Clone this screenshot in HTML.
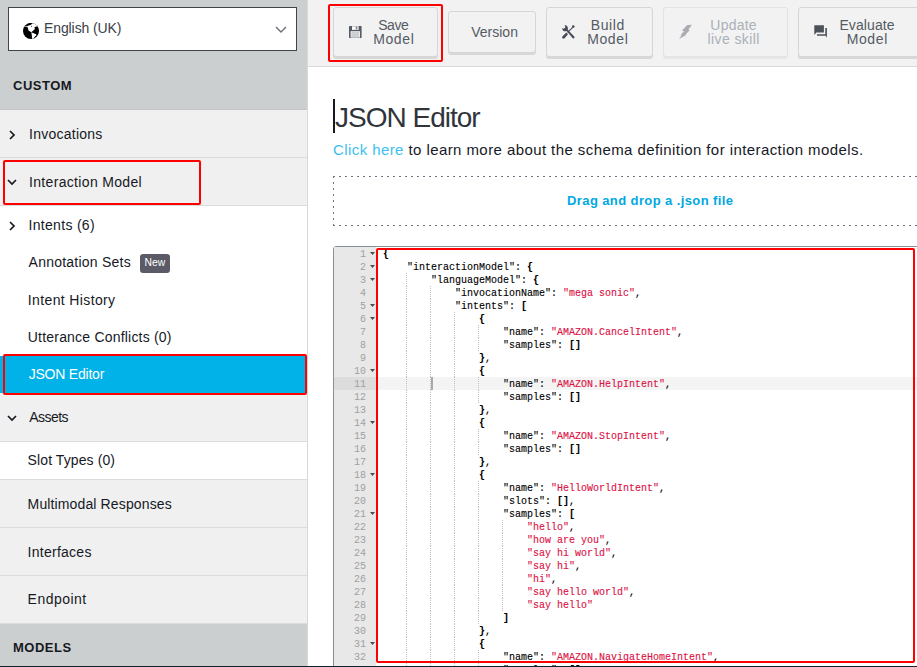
<!DOCTYPE html>
<html><head><meta charset="utf-8"><style>
*{box-sizing:border-box;margin:0;padding:0}
html,body{width:917px;height:667px;overflow:hidden;background:#fff;font-family:"Liberation Sans",sans-serif;color:#232f3e}
.a{position:absolute}
.t{position:absolute;white-space:pre;line-height:1}
#side{position:absolute;left:0;top:0;width:308px;height:667px;background:#f0f0f0}
.sep{position:absolute;left:0;width:307px;height:1px;background:#dcdcdc}
.chev{position:absolute;width:6px;height:6px;border-right:1.6px solid #16191f;border-bottom:1.6px solid #16191f}
.btn{position:absolute;background:#f2f2f2;border:1px solid #d6d6d6;border-radius:3px;box-shadow:0 2px 0 #d8d8d8;color:#545b64;font-size:14px;line-height:14px}
.code{position:absolute;left:383px;font-family:"Liberation Mono",monospace;font-size:10.5px;line-height:13px;white-space:pre;color:#000;transform-origin:0 0;transform:scaleX(0.95238);-webkit-text-stroke:0.12px currentColor}
.s{color:#dd1144}
.p{font-weight:bold}
.ln{position:absolute;left:326px;width:40px;text-align:right;font-family:"Liberation Mono",monospace;font-size:10.5px;line-height:13px;color:#a0a0a0;transform-origin:100% 0;transform:scaleX(0.95238)}
.fold{position:absolute;left:370px;width:0;height:0;border-left:2.5px solid transparent;border-right:2.5px solid transparent;border-top:3px solid #777}
.guide{position:absolute;width:1px;background:repeating-linear-gradient(to bottom,#c0c0c0 0,#c0c0c0 1px,transparent 1px,transparent 2px)}
</style></head><body>
<div id="side">
<div class="a" style="left:0;top:0;width:307px;height:109px;background:#cbcfd0"></div>
<div class="a" style="left:0;top:109px;width:307px;height:1px;background:#c4c4c4"></div>
<div class="a" style="left:8px;top:7px;width:289px;height:44px;background:#fff;border:1px solid #3f4548"></div>
<svg class="a" style="left:20px;top:20px" width="22" height="22" viewBox="0 0 22 22"><defs><clipPath id="gc"><circle cx="11" cy="11" r="8"/></clipPath></defs><g clip-path="url(#gc)"><rect width="22" height="22" fill="#000"/><path d="M2.5 6.6L3 6.8 4.6 6.4 7.4 6.7 8.6 10.5 11.2 12.2 12.8 10.9 14.9 8.9 14.5 6.9 16.8 6.4 18.5 4.5 15 2.5 14 3.6 13.5 2.5 11 4.8 7.2 5.9 4 5.8z" fill="#fff"/><path d="M6.2 5.2L9.5 4.1 13 2.6 11.5 2.5 7.8 3.6z" fill="#000"/><path d="M11.2 12.3L15.6 14 16.6 15 14.3 17.2 13.4 19 12 18.8 11.8 14.9z" fill="#fff"/><circle cx="11.6" cy="6.2" r="0.5" fill="#000"/></g></svg>
<div class="t" style="left:44px;top:21.4px;font-size:14px;color:#3b4148;letter-spacing:-0.1px">English (UK)</div>
<svg class="a" style="left:275px;top:25px" width="12" height="9" viewBox="0 0 12 9"><path d="M1 2l5 5 5-5" fill="none" stroke="#6b6f75" stroke-width="1.4"/></svg>
<div class="t" style="left:13px;top:79.0px;font-size:13px;font-weight:bold;color:#16191f;letter-spacing:0.5px">CUSTOM</div>
<div class="a" style="left:0;top:110px;width:307px;height:47px;background:#f0f0f0"></div>
<div class="a" style="left:0;top:158px;width:307px;height:47px;background:#f0f0f0"></div>
<div class="a" style="left:0;top:206px;width:307px;height:150px;background:#ffffff"></div>
<div class="a" style="left:0;top:356px;width:307px;height:37px;background:#00b2e7"></div>
<div class="a" style="left:0;top:393px;width:307px;height:48px;background:#f0f0f0"></div>
<div class="a" style="left:0;top:442px;width:307px;height:37px;background:#ffffff"></div>
<div class="a" style="left:0;top:480px;width:307px;height:47px;background:#f0f0f0"></div>
<div class="a" style="left:0;top:528px;width:307px;height:47px;background:#f0f0f0"></div>
<div class="a" style="left:0;top:576px;width:307px;height:48px;background:#f0f0f0"></div>
<div class="a" style="left:0;top:624px;width:307px;height:43px;background:#cbcfd0"></div>
<div class="sep" style="top:157px"></div>
<div class="sep" style="top:205px"></div>
<div class="sep" style="top:441px"></div>
<div class="sep" style="top:479px"></div>
<div class="sep" style="top:527px"></div>
<div class="sep" style="top:575px"></div>
<div class="sep" style="top:623px"></div>
<div class="t" style="left:29px;top:126.9px;font-size:14px;color:#16191f;letter-spacing:0.25px">Invocations</div>
<div class="t" style="left:29px;top:174.9px;font-size:14px;color:#16191f;letter-spacing:0.33px">Interaction Model</div>
<div class="t" style="left:28.5px;top:218.3px;font-size:14px;color:#16191f;letter-spacing:0.31px">Intents (6)</div>
<div class="t" style="left:28.6px;top:255.2px;font-size:14px;color:#16191f;letter-spacing:0.23px">Annotation Sets</div>
<div class="t" style="left:27.8px;top:293.2px;font-size:14px;color:#16191f;letter-spacing:0.37px">Intent History</div>
<div class="t" style="left:27.8px;top:329.9px;font-size:14px;color:#16191f;letter-spacing:0.2px">Utterance Conflicts (0)</div>
<div class="t" style="left:28.7px;top:367.1px;font-size:14px;color:#ffffff;letter-spacing:-0.22px">JSON Editor</div>
<div class="t" style="left:29.3px;top:410.0px;font-size:14px;color:#16191f;letter-spacing:-0.55px">Assets</div>
<div class="t" style="left:27.6px;top:453.4px;font-size:14px;color:#16191f;letter-spacing:0.1px">Slot Types (0)</div>
<div class="t" style="left:27.6px;top:496.9px;font-size:14px;color:#16191f;letter-spacing:0.13px">Multimodal Responses</div>
<div class="t" style="left:27.6px;top:544.7px;font-size:14px;color:#16191f;letter-spacing:0.26px">Interfaces</div>
<div class="t" style="left:27.6px;top:592.4px;font-size:14px;color:#16191f;letter-spacing:0.47px">Endpoint</div>
<svg class="a" style="left:8px;top:130px" width="8" height="10" viewBox="0 0 8 10"><path d="M2 1l4 4-4 4" fill="none" stroke="#16191f" stroke-width="1.7"/></svg>
<svg class="a" style="left:7px;top:178px" width="10" height="8" viewBox="0 0 10 8"><path d="M1 2l4 4 4-4" fill="none" stroke="#16191f" stroke-width="1.7"/></svg>
<svg class="a" style="left:8px;top:221px" width="8" height="10" viewBox="0 0 8 10"><path d="M2 1l4 4-4 4" fill="none" stroke="#16191f" stroke-width="1.7"/></svg>
<svg class="a" style="left:7px;top:414px" width="10" height="8" viewBox="0 0 10 8"><path d="M1 2l4 4 4-4" fill="none" stroke="#16191f" stroke-width="1.7"/></svg>
<div class="a" style="left:140px;top:254px;width:30px;height:19px;background:#5a5b66;border-radius:3px"></div>
<div class="t" style="left:144.5px;top:258.1px;font-size:10.3px;color:#fff">New</div>
<div class="t" style="left:13px;top:640.7px;font-size:13px;font-weight:bold;color:#16191f;letter-spacing:0.5px">MODELS</div>
<div class="a" style="left:3px;top:160px;width:198px;height:45px;border:2px solid #f00;border-radius:2px"></div>
<div class="a" style="left:3px;top:354px;width:304px;height:41px;border:2px solid #f00;border-radius:2px"></div>
</div>
<div class="a" style="left:307px;top:0;width:1px;height:667px;background:#d8d8d8"></div>
<div class="a" style="left:308px;top:0;width:609px;height:67px;background:#f2f2f2;border-bottom:1px solid #dadada"></div>
<div class="btn" style="left:333px;top:7px;width:105px;height:50px"></div>
<div class="btn" style="left:448px;top:11px;width:88px;height:42px"></div>
<div class="btn" style="left:546px;top:7px;width:107px;height:50px"></div>
<div class="btn" style="left:663px;top:7px;width:125px;height:50px;border-color:#e3e3e3;box-shadow:0 2px 0 #e7e7e7"></div>
<div class="btn" style="left:798px;top:7px;width:130px;height:50px"></div>
<div class="a" style="left:328px;top:4px;width:115px;height:58px;border:2px solid #f00;border-radius:2px"></div>
<div class="t" style="left:243.5px;width:300px;text-align:center;top:18.0px;font-size:14px;color:#545b64;letter-spacing:-0.4px;text-indent:-0.4px">Save</div>
<div class="t" style="left:243.5px;width:300px;text-align:center;top:31.7px;font-size:14px;color:#545b64;letter-spacing:0.6px;text-indent:0.6px">Model</div>
<div class="t" style="left:344.6px;width:300px;text-align:center;top:25.0px;font-size:14px;color:#545b64;letter-spacing:0px;text-indent:0px">Version</div>
<div class="t" style="left:457.5px;width:300px;text-align:center;top:17.8px;font-size:14px;color:#545b64;letter-spacing:0.6px;text-indent:0.6px">Build</div>
<div class="t" style="left:457.5px;width:300px;text-align:center;top:31.8px;font-size:14px;color:#545b64;letter-spacing:0.6px;text-indent:0.6px">Model</div>
<div class="t" style="left:583.5px;width:300px;text-align:center;top:18.2px;font-size:14px;color:#aab1b8;letter-spacing:0.24px;text-indent:0.24px">Update</div>
<div class="t" style="left:583.5px;width:300px;text-align:center;top:31.8px;font-size:14px;color:#aab1b8;letter-spacing:0.4px;text-indent:0.4px">live skill</div>
<div class="t" style="left:717px;width:300px;text-align:center;top:17.8px;font-size:14px;color:#545b64;letter-spacing:0.1px;text-indent:0.1px">Evaluate</div>
<div class="t" style="left:717px;width:300px;text-align:center;top:31.6px;font-size:14px;color:#545b64;letter-spacing:0.6px;text-indent:0.6px">Model</div>
<svg class="a" style="left:349px;top:26px" width="13" height="12" viewBox="0 0 13 12"><rect x="0" y="0" width="12.6" height="12" rx="0.8" fill="#545b64"/><rect x="3" y="0.3" width="6.6" height="3.6" fill="#fff"/><rect x="6.8" y="0.6" width="1" height="3" fill="#545b64"/><rect x="7.8" y="0.6" width="1.6" height="3" fill="#c9cccf"/><rect x="1.6" y="5.2" width="9.4" height="6.3" fill="#f4f4f4"/><rect x="2.4" y="6" width="7.8" height="5.5" fill="#cdd0d3"/></svg>
<svg class="a" style="left:558px;top:22px" width="22" height="20" viewBox="0 0 22 20"><g fill="#454c55" stroke="none"><path d="M6.6 3.1C8.5 3.2 9.9 4.7 9.9 6.4 9.9 8 8.7 9.3 7.1 9.3 5.5 9.3 4.2 8.1 4.1 6.2L5.5 6.7 6.9 6 7.3 4.6z"/><path d="M8.2 8.4L9.4 7.3 16.2 14.6C16.7 15.2 16.6 15.9 16.1 16.3 15.6 16.7 14.9 16.6 14.5 16.1z"/><circle cx="15.3" cy="4.6" r="1.25"/><path d="M14.8 4.6L15.6 5.3 9.9 10.8 9.2 10.1z"/><path d="M8.3 10.6L10 12.3 6.6 16.2C6.1 16.8 5.1 16.9 4.5 16.3 3.9 15.7 4 14.8 4.6 14.3z"/></g></svg>
<svg class="a" style="left:674px;top:20px" width="24" height="22" viewBox="0 0 24 22"><path d="M13.3 4.9L18 4.8 14.4 9.6 15.7 10.2 11.6 14.5 12.2 15 5.1 19 7.6 14.9 6.9 14.6 10.2 11.2 8 10.6z" fill="#a9acb1"/></svg>
<svg class="a" style="left:814px;top:25px" width="14" height="14" viewBox="0 0 14 14"><path d="M0.3 0.2H9.9V7.4H2.4L0.3 9.9z" fill="#4c5259"/><path d="M11.3 3H12.9V12.8L11.6 10.8H3V9.2H11.3z" fill="#4c5259"/></svg>
<div class="a" style="left:333px;top:99px;width:2px;height:34px;background:#16191f"></div>
<div class="t" style="left:335px;top:103.6px;font-size:28px;color:#30353c;letter-spacing:-1px">JSON Editor</div>
<div class="t" style="left:333px;top:141.6px;font-size:15px;color:#16191f;letter-spacing:0.42px"><span style="color:#3cc0ec">Click here</span> to learn more about the schema definition for interaction models.</div>
<div class="a" style="left:333px;top:176px;width:600px;height:1px;background:repeating-linear-gradient(to right,#707381 0 2px,transparent 2px 6px)"></div>
<div class="a" style="left:333px;top:225px;width:600px;height:1px;background:repeating-linear-gradient(to right,#707381 0 2px,transparent 2px 6px)"></div>
<div class="a" style="left:333px;top:176px;width:1px;height:50px;background:repeating-linear-gradient(to bottom,#707381 0 2px,transparent 2px 6px)"></div>
<div class="t" style="left:567px;top:194.0px;font-size:13px;font-weight:bold;color:#00a8e1;letter-spacing:0.4px">Drag and drop a .json file</div>
<div class="a" style="left:333px;top:246px;width:600px;height:430px;border:1px solid #878e99;border-radius:3px;background:#fff"></div>
<div class="a" style="left:334px;top:247px;width:42px;height:420px;background:#e8e8e8"></div>
<div class="a" style="left:334px;top:377px;width:42px;height:13px;background:#dcdcdc"></div>
<div class="a" style="left:376px;top:377px;width:541px;height:13px;background:#f4f4f4"></div>
<div class="a" style="left:431px;top:377px;width:2px;height:13px;background:#aaa"></div>
<div class="ln" style="top:248px">1</div>
<svg class="a" style="left:370px;top:252px" width="5" height="3" viewBox="0 0 5 3"><path d="M0 0H5L2.5 3z" fill="#4d4d4d"/></svg>
<div class="ln" style="top:261px">2</div>
<svg class="a" style="left:370px;top:265px" width="5" height="3" viewBox="0 0 5 3"><path d="M0 0H5L2.5 3z" fill="#4d4d4d"/></svg>
<div class="ln" style="top:274px">3</div>
<svg class="a" style="left:370px;top:278px" width="5" height="3" viewBox="0 0 5 3"><path d="M0 0H5L2.5 3z" fill="#4d4d4d"/></svg>
<div class="guide" style="left:406px;top:273px;height:13px"></div>
<div class="ln" style="top:287px">4</div>
<div class="guide" style="left:406px;top:286px;height:13px"></div>
<div class="guide" style="left:430px;top:286px;height:13px"></div>
<div class="ln" style="top:300px">5</div>
<svg class="a" style="left:370px;top:304px" width="5" height="3" viewBox="0 0 5 3"><path d="M0 0H5L2.5 3z" fill="#4d4d4d"/></svg>
<div class="guide" style="left:406px;top:299px;height:13px"></div>
<div class="guide" style="left:430px;top:299px;height:13px"></div>
<div class="ln" style="top:313px">6</div>
<svg class="a" style="left:370px;top:317px" width="5" height="3" viewBox="0 0 5 3"><path d="M0 0H5L2.5 3z" fill="#4d4d4d"/></svg>
<div class="guide" style="left:406px;top:312px;height:13px"></div>
<div class="guide" style="left:430px;top:312px;height:13px"></div>
<div class="guide" style="left:454px;top:312px;height:13px"></div>
<div class="ln" style="top:326px">7</div>
<div class="guide" style="left:406px;top:325px;height:13px"></div>
<div class="guide" style="left:430px;top:325px;height:13px"></div>
<div class="guide" style="left:454px;top:325px;height:13px"></div>
<div class="guide" style="left:478px;top:325px;height:13px"></div>
<div class="ln" style="top:339px">8</div>
<div class="guide" style="left:406px;top:338px;height:13px"></div>
<div class="guide" style="left:430px;top:338px;height:13px"></div>
<div class="guide" style="left:454px;top:338px;height:13px"></div>
<div class="guide" style="left:478px;top:338px;height:13px"></div>
<div class="ln" style="top:352px">9</div>
<div class="guide" style="left:406px;top:351px;height:13px"></div>
<div class="guide" style="left:430px;top:351px;height:13px"></div>
<div class="guide" style="left:454px;top:351px;height:13px"></div>
<div class="ln" style="top:365px">10</div>
<svg class="a" style="left:370px;top:369px" width="5" height="3" viewBox="0 0 5 3"><path d="M0 0H5L2.5 3z" fill="#4d4d4d"/></svg>
<div class="guide" style="left:406px;top:364px;height:13px"></div>
<div class="guide" style="left:430px;top:364px;height:13px"></div>
<div class="guide" style="left:454px;top:364px;height:13px"></div>
<div class="ln" style="top:378px">11</div>
<div class="guide" style="left:406px;top:377px;height:13px"></div>
<div class="guide" style="left:430px;top:377px;height:13px"></div>
<div class="guide" style="left:454px;top:377px;height:13px"></div>
<div class="guide" style="left:478px;top:377px;height:13px"></div>
<div class="ln" style="top:391px">12</div>
<div class="guide" style="left:406px;top:390px;height:13px"></div>
<div class="guide" style="left:430px;top:390px;height:13px"></div>
<div class="guide" style="left:454px;top:390px;height:13px"></div>
<div class="guide" style="left:478px;top:390px;height:13px"></div>
<div class="ln" style="top:404px">13</div>
<div class="guide" style="left:406px;top:403px;height:13px"></div>
<div class="guide" style="left:430px;top:403px;height:13px"></div>
<div class="guide" style="left:454px;top:403px;height:13px"></div>
<div class="ln" style="top:417px">14</div>
<svg class="a" style="left:370px;top:421px" width="5" height="3" viewBox="0 0 5 3"><path d="M0 0H5L2.5 3z" fill="#4d4d4d"/></svg>
<div class="guide" style="left:406px;top:416px;height:13px"></div>
<div class="guide" style="left:430px;top:416px;height:13px"></div>
<div class="guide" style="left:454px;top:416px;height:13px"></div>
<div class="ln" style="top:430px">15</div>
<div class="guide" style="left:406px;top:429px;height:13px"></div>
<div class="guide" style="left:430px;top:429px;height:13px"></div>
<div class="guide" style="left:454px;top:429px;height:13px"></div>
<div class="guide" style="left:478px;top:429px;height:13px"></div>
<div class="ln" style="top:443px">16</div>
<div class="guide" style="left:406px;top:442px;height:13px"></div>
<div class="guide" style="left:430px;top:442px;height:13px"></div>
<div class="guide" style="left:454px;top:442px;height:13px"></div>
<div class="guide" style="left:478px;top:442px;height:13px"></div>
<div class="ln" style="top:456px">17</div>
<div class="guide" style="left:406px;top:455px;height:13px"></div>
<div class="guide" style="left:430px;top:455px;height:13px"></div>
<div class="guide" style="left:454px;top:455px;height:13px"></div>
<div class="ln" style="top:469px">18</div>
<svg class="a" style="left:370px;top:473px" width="5" height="3" viewBox="0 0 5 3"><path d="M0 0H5L2.5 3z" fill="#4d4d4d"/></svg>
<div class="guide" style="left:406px;top:468px;height:13px"></div>
<div class="guide" style="left:430px;top:468px;height:13px"></div>
<div class="guide" style="left:454px;top:468px;height:13px"></div>
<div class="ln" style="top:482px">19</div>
<div class="guide" style="left:406px;top:481px;height:13px"></div>
<div class="guide" style="left:430px;top:481px;height:13px"></div>
<div class="guide" style="left:454px;top:481px;height:13px"></div>
<div class="guide" style="left:478px;top:481px;height:13px"></div>
<div class="ln" style="top:495px">20</div>
<div class="guide" style="left:406px;top:494px;height:13px"></div>
<div class="guide" style="left:430px;top:494px;height:13px"></div>
<div class="guide" style="left:454px;top:494px;height:13px"></div>
<div class="guide" style="left:478px;top:494px;height:13px"></div>
<div class="ln" style="top:508px">21</div>
<svg class="a" style="left:370px;top:512px" width="5" height="3" viewBox="0 0 5 3"><path d="M0 0H5L2.5 3z" fill="#4d4d4d"/></svg>
<div class="guide" style="left:406px;top:507px;height:13px"></div>
<div class="guide" style="left:430px;top:507px;height:13px"></div>
<div class="guide" style="left:454px;top:507px;height:13px"></div>
<div class="guide" style="left:478px;top:507px;height:13px"></div>
<div class="ln" style="top:521px">22</div>
<div class="guide" style="left:406px;top:520px;height:13px"></div>
<div class="guide" style="left:430px;top:520px;height:13px"></div>
<div class="guide" style="left:454px;top:520px;height:13px"></div>
<div class="guide" style="left:478px;top:520px;height:13px"></div>
<div class="guide" style="left:502px;top:520px;height:13px"></div>
<div class="ln" style="top:534px">23</div>
<div class="guide" style="left:406px;top:533px;height:13px"></div>
<div class="guide" style="left:430px;top:533px;height:13px"></div>
<div class="guide" style="left:454px;top:533px;height:13px"></div>
<div class="guide" style="left:478px;top:533px;height:13px"></div>
<div class="guide" style="left:502px;top:533px;height:13px"></div>
<div class="ln" style="top:547px">24</div>
<div class="guide" style="left:406px;top:546px;height:13px"></div>
<div class="guide" style="left:430px;top:546px;height:13px"></div>
<div class="guide" style="left:454px;top:546px;height:13px"></div>
<div class="guide" style="left:478px;top:546px;height:13px"></div>
<div class="guide" style="left:502px;top:546px;height:13px"></div>
<div class="ln" style="top:560px">25</div>
<div class="guide" style="left:406px;top:559px;height:13px"></div>
<div class="guide" style="left:430px;top:559px;height:13px"></div>
<div class="guide" style="left:454px;top:559px;height:13px"></div>
<div class="guide" style="left:478px;top:559px;height:13px"></div>
<div class="guide" style="left:502px;top:559px;height:13px"></div>
<div class="ln" style="top:573px">26</div>
<div class="guide" style="left:406px;top:572px;height:13px"></div>
<div class="guide" style="left:430px;top:572px;height:13px"></div>
<div class="guide" style="left:454px;top:572px;height:13px"></div>
<div class="guide" style="left:478px;top:572px;height:13px"></div>
<div class="guide" style="left:502px;top:572px;height:13px"></div>
<div class="ln" style="top:586px">27</div>
<div class="guide" style="left:406px;top:585px;height:13px"></div>
<div class="guide" style="left:430px;top:585px;height:13px"></div>
<div class="guide" style="left:454px;top:585px;height:13px"></div>
<div class="guide" style="left:478px;top:585px;height:13px"></div>
<div class="guide" style="left:502px;top:585px;height:13px"></div>
<div class="ln" style="top:599px">28</div>
<div class="guide" style="left:406px;top:598px;height:13px"></div>
<div class="guide" style="left:430px;top:598px;height:13px"></div>
<div class="guide" style="left:454px;top:598px;height:13px"></div>
<div class="guide" style="left:478px;top:598px;height:13px"></div>
<div class="guide" style="left:502px;top:598px;height:13px"></div>
<div class="ln" style="top:612px">29</div>
<div class="guide" style="left:406px;top:611px;height:13px"></div>
<div class="guide" style="left:430px;top:611px;height:13px"></div>
<div class="guide" style="left:454px;top:611px;height:13px"></div>
<div class="guide" style="left:478px;top:611px;height:13px"></div>
<div class="ln" style="top:625px">30</div>
<div class="guide" style="left:406px;top:624px;height:13px"></div>
<div class="guide" style="left:430px;top:624px;height:13px"></div>
<div class="guide" style="left:454px;top:624px;height:13px"></div>
<div class="ln" style="top:638px">31</div>
<svg class="a" style="left:370px;top:642px" width="5" height="3" viewBox="0 0 5 3"><path d="M0 0H5L2.5 3z" fill="#4d4d4d"/></svg>
<div class="guide" style="left:406px;top:637px;height:13px"></div>
<div class="guide" style="left:430px;top:637px;height:13px"></div>
<div class="guide" style="left:454px;top:637px;height:13px"></div>
<div class="ln" style="top:651px">32</div>
<div class="guide" style="left:406px;top:650px;height:13px"></div>
<div class="guide" style="left:430px;top:650px;height:13px"></div>
<div class="guide" style="left:454px;top:650px;height:13px"></div>
<div class="guide" style="left:478px;top:650px;height:13px"></div>
<div class="ln" style="top:664px">33</div>
<div class="guide" style="left:406px;top:663px;height:13px"></div>
<div class="guide" style="left:430px;top:663px;height:13px"></div>
<div class="guide" style="left:454px;top:663px;height:13px"></div>
<div class="guide" style="left:478px;top:663px;height:13px"></div>
<div class="code" style="top:248px"><span class="p">{</span>
    &quot;interactionModel&quot;: <span class="p">{</span>
        &quot;languageModel&quot;: <span class="p">{</span>
            &quot;invocationName&quot;: <span class="s">&quot;mega sonic&quot;</span>,
            &quot;intents&quot;: <span class="p">[</span>
                <span class="p">{</span>
                    &quot;name&quot;: <span class="s">&quot;AMAZON.CancelIntent&quot;</span>,
                    &quot;samples&quot;: <span class="p">[</span><span class="p">]</span>
                <span class="p">}</span>,
                <span class="p">{</span>
                    &quot;name&quot;: <span class="s">&quot;AMAZON.HelpIntent&quot;</span>,
                    &quot;samples&quot;: <span class="p">[</span><span class="p">]</span>
                <span class="p">}</span>,
                <span class="p">{</span>
                    &quot;name&quot;: <span class="s">&quot;AMAZON.StopIntent&quot;</span>,
                    &quot;samples&quot;: <span class="p">[</span><span class="p">]</span>
                <span class="p">}</span>,
                <span class="p">{</span>
                    &quot;name&quot;: <span class="s">&quot;HelloWorldIntent&quot;</span>,
                    &quot;slots&quot;: <span class="p">[</span><span class="p">]</span>,
                    &quot;samples&quot;: <span class="p">[</span>
                        <span class="s">&quot;hello&quot;</span>,
                        <span class="s">&quot;how are you&quot;</span>,
                        <span class="s">&quot;say hi world&quot;</span>,
                        <span class="s">&quot;say hi&quot;</span>,
                        <span class="s">&quot;hi&quot;</span>,
                        <span class="s">&quot;say hello world&quot;</span>,
                        <span class="s">&quot;say hello&quot;</span>
                    <span class="p">]</span>
                <span class="p">}</span>,
                <span class="p">{</span>
                    &quot;name&quot;: <span class="s">&quot;AMAZON.NavigateHomeIntent&quot;</span>,
                    &quot;samples&quot;: <span class="p">[</span><span class="p">]</span></div>
<div class="a" style="left:376px;top:248px;width:539px;height:415px;border:2px solid #f00;border-radius:2px"></div>
<div class="a" style="left:0;top:666px;width:917px;height:1px;background:#16202b"></div>
</body></html>
